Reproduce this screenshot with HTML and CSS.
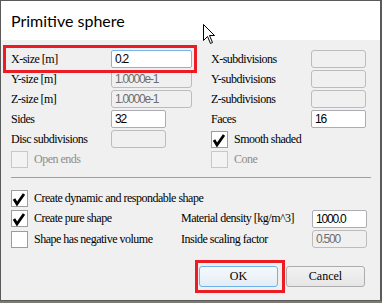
FILE: index.html
```html
<!DOCTYPE HTML>
<html lang="en">

<head>
  <meta name="viewport" content="width=device-width, initial-scale=1" charset="utf-8">
  <title>Primitive sphere</title>
  <link rel="stylesheet" href="styles.css">
</head>

<body>
  <div class="dialog">
    <div class="titlebar">
      <span class="title">Primitive sphere</span>
    </div>

    <div class="content">
      <div class="fields">
        <span class="lbl">X-size [m]</span>
        <span class="edit wide focus">0.2</span>
        <span class="lbl">X-subdivisions</span>
        <span class="edit off"></span>

        <span class="lbl">Y-size [m]</span>
        <span class="edit wide off">1.0000e-1</span>
        <span class="lbl">Y-subdivisions</span>
        <span class="edit off"></span>

        <span class="lbl">Z-size [m]</span>
        <span class="edit wide off">1.0000e-1</span>
        <span class="lbl">Z-subdivisions</span>
        <span class="edit off"></span>

        <span class="lbl">Sides</span>
        <span class="edit">32</span>
        <span class="lbl">Faces</span>
        <span class="edit">16</span>

        <span class="lbl">Disc subdivisions</span>
        <span class="edit off"></span>
        <span class="check span-2"><span class="box"><svg width="17" height="17" viewBox="0 0 17 17"><polyline points="3,9 6,14 13,4" /></svg></span>Smooth shaded</span>

        <span class="check span-2 disabled"><span class="box"></span>Open ends</span>
        <span class="check span-2 disabled"><span class="box"></span>Cone</span>
      </div>

      <hr class="sep">

      <div class="options">
        <span class="check span-3"><span class="box"><svg width="17" height="17" viewBox="0 0 17 17"><polyline points="3,9 6,14 13,4" /></svg></span>Create dynamic and respondable shape</span>

        <span class="check"><span class="box"><svg width="17" height="17" viewBox="0 0 17 17"><polyline points="3,9 6,14 13,4" /></svg></span>Create pure shape</span>
        <span class="lbl">Material density [kg/m^3]</span>
        <span class="edit">1000.0</span>

        <span class="check"><span class="box"></span>Shape has negative volume</span>
        <span class="lbl">Inside scaling factor</span>
        <span class="edit off">0.500</span>
      </div>

      <div class="buttons">
        <button type="button" class="btn default">OK</button>
        <button type="button" class="btn">Cancel</button>
      </div>
    </div>

    <!-- annotations drawn over the dialog -->
    <div class="mark mark-xsize"></div>
    <div class="mark mark-ok"></div>

    <svg class="cursor" width="13" height="21" viewBox="0 0 13 21">
      <path d="M0.5,0.5 L0.5,16.5 L4.5,12.5 L7.5,19.5 L9.5,18.5 L6.5,11.5 L11.5,11.5 Z" />
    </svg>
  </div>
</body>

</html>
```

FILE: styles.css
```css
body {
  background-color: #7d7a74;
  margin: 0;
  padding: 0;
  font-family: "Liberation Serif", "DejaVu Serif", serif;
  font-size: 12px;
  color: #000;
}

.dialog {
  position: relative;
  width: 382px;
  height: 301px;
  box-sizing: border-box;
  border: 1px solid #5a5a5a;
  border-right-width: 2px;
  background-color: #f0f0f0;
}

.titlebar {
  height: 39px;
  background-color: #fff;
  box-sizing: border-box;
  padding: 10px 0 0 10px;
}

.title {
  font-family: Lato, "Noto Sans", sans-serif;
  font-size: 16px;
  color: #000;
}

.content {
  padding: 10px 0 0 10px;
}

/* top block: two label / value columns */
.fields {
  display: grid;
  grid-template-columns: 100px 100px 100px 55px;
  grid-auto-rows: 18px;
  row-gap: 2px;
}

.lbl {
  display: flex;
  align-items: center;
  white-space: nowrap;
  letter-spacing: -0.5px;
}

.edit {
  display: flex;
  align-items: center;
  width: 55px;
  height: 18px;
  box-sizing: border-box;
  padding-left: 3px;
  background-color: #fff;
  border: 1px solid #abadb3;
  border-radius: 2px;
  font-family: "Liberation Sans", sans-serif;
  font-size: 12px;
  letter-spacing: -1.2px;
  color: #000;
}

.edit.wide {
  width: 81px;
}

.edit.focus {
  border-color: #7eb4ea;
}

.edit.off {
  background-color: #f0f0f0;
  border-color: #bcbcbc;
  border-radius: 3px;
  color: #6d6d6d;
}

.check {
  display: flex;
  align-items: center;
  white-space: nowrap;
  letter-spacing: -0.5px;
}

.check .box {
  width: 17px;
  height: 17px;
  box-sizing: border-box;
  margin-right: 6px;
  background-color: #fff;
  border: 1px solid #9d9d9d;
  flex-shrink: 0;
}

.check .box svg {
  display: block;
  margin: -1px 0 0 -1px;
}

.check polyline {
  fill: none;
  stroke: #000;
  stroke-width: 2.8;
}

.check.disabled {
  color: #8d8d8d;
}

.check.disabled .box {
  background-color: #f3f3f3;
  border-color: #c8c8c8;
}

.span-2 {
  grid-column: span 2;
}

.span-3 {
  grid-column: span 3;
}

.sep {
  margin: 9px 9px 11px 0;
  border: none;
  border-top: 1px solid #a0a0a0;
}

/* lower block: flags plus two values */
.options {
  display: grid;
  grid-template-columns: 170px 131px 55px;
  grid-auto-rows: 18px;
  row-gap: 2.5px;
}

.buttons {
  display: flex;
  justify-content: flex-end;
  gap: 8px;
  margin: 18px 15px 0 0;
}

.btn {
  width: 79px;
  height: 21px;
  padding: 0;
  font-family: "Liberation Serif", "DejaVu Serif", serif;
  font-size: 12px;
  color: #000;
  border: 1px solid #acacac;
  border-radius: 3px;
  background: linear-gradient(#f2f2f2, #e6e6e6);
}

.btn.default {
  border-color: #6fb1ea;
  background: linear-gradient(#f5f9fd, #e3edf6);
}

.mark {
  position: absolute;
  border: 3px solid #ec1c24;
}

.mark-xsize {
  left: 2px;
  top: 44px;
  width: 188px;
  height: 22px;
}

.mark-ok {
  left: 194px;
  top: 259px;
  width: 84px;
  height: 27px;
}

.cursor {
  position: absolute;
  left: 202px;
  top: 23px;
}

.cursor path {
  fill: #fff;
  stroke: #000;
  stroke-width: 1;
}
```
